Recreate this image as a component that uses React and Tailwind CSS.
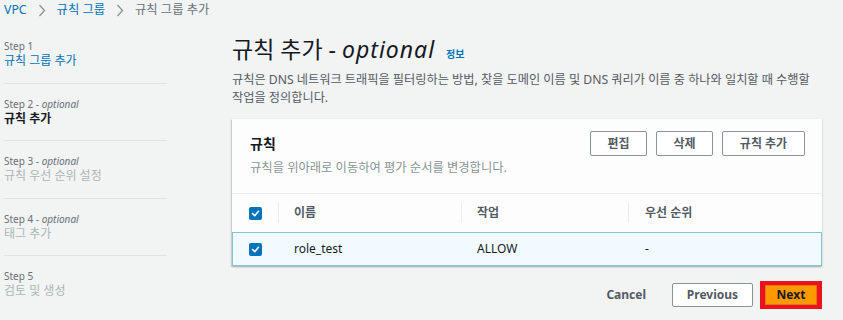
import React from 'react';

const FONT = { fontFamily: '"Noto Sans", "Noto Sans CJK KR", sans-serif' };

const steps = [
  { label: 'Step 1', name: '규칙 그룹 추가', state: 'done' },
  { label: 'Step 2', optional: true, name: '규칙 추가', state: 'current' },
  { label: 'Step 3', optional: true, name: '규칙 우선 순위 설정', state: 'todo' },
  { label: 'Step 4', optional: true, name: '태그 추가', state: 'todo' },
  { label: 'Step 5', name: '검토 및 생성', state: 'todo' },
];

const Chevron = () => (
  <svg width="8" height="13" viewBox="0 0 8 13" className="mx-[11px]">
    <polyline points="1.5,1 6.5,6.5 1.5,12" fill="none" stroke="#879596" strokeWidth="1.3" />
  </svg>
);

const Checkbox = () => (
  <span className="w-[13px] h-[13px] rounded-[2px] bg-[#0073bb] flex items-center justify-center">
    <svg width="9" height="9" viewBox="0 0 10 10">
      <polyline points="1.8,5.2 4.2,7.5 8.3,2.6" fill="none" stroke="#fff" strokeWidth="1.8" strokeLinecap="round" strokeLinejoin="round" />
    </svg>
  </span>
);

const OutlineButton = ({ children, width }) => (
  <button
    type="button"
    className={`h-[25px] ${width} border border-[#879596] rounded-[2px] bg-white text-[12px] font-bold text-[#545b64] leading-none`}
  >
    {children}
  </button>
);

export default function App() {
  return (
    <div className="w-[843px] h-[320px] bg-[#f2f3f3] overflow-hidden text-[#16191f]" style={FONT}>
      {/* Breadcrumb */}
      <div className="h-[20px] flex items-center pl-[4px] text-[12.3px]">
        <span className="text-[#0073bb]">VPC</span>
        <Chevron />
        <span className="text-[#0073bb]">규칙 그룹</span>
        <Chevron />
        <span className="text-[#687078]">규칙 그룹 추가</span>
      </div>

      <div className="flex">
        {/* Wizard steps */}
        <nav className="ml-[4px] w-[163px] mt-[19px]">
          {steps.map((s, i) => (
            <div
              key={s.label}
              className={`${i === 0 ? 'pt-0' : 'pt-[13px]'} pb-[13.5px] ${i < steps.length - 1 ? 'border-b border-[#dfe3e3]' : ''}`}
            >
              <div className="text-[10px] leading-[14px] text-[#687078]">
                {s.label}
                {s.optional && <span> - <i>optional</i></span>}
              </div>
              <div
                className={`text-[12px] leading-[16px] ${
                  s.state === 'done'
                    ? 'text-[#0073bb]'
                    : s.state === 'current'
                    ? 'font-bold text-[#16191f]'
                    : 'text-[#aab7b8]'
                }`}
              >
                {s.name}
              </div>
            </div>
          ))}
        </nav>

        {/* Main content */}
        <main className="ml-[65px] w-[590px] mt-[14px]">
          <h1 className="text-[23px] leading-[30px] font-normal flex items-baseline">
            <span>규칙 추가 - <i className="tracking-[1px]">optional</i></span>
            <span className="ml-[11px] text-[10px] font-bold text-[#0073bb]">정보</span>
          </h1>
          <p className="mt-[2px] text-[12.2px] leading-[18px] text-[#545b64] whitespace-nowrap">
            규칙은 DNS 네트워크 트래픽을 필터링하는 방법, 찾을 도메인 이름 및 DNS 쿼리가 이름 중 하나와 일치할 때 수행할
            <br />
            작업을 정의합니다.
          </p>

          {/* Rules card */}
          <section className="mt-[12px] bg-[#fdfdfd] shadow-[0_1px_2px_rgba(0,28,36,0.25),-1px_1px_1px_rgba(0,28,36,0.1)]">
            <div className="flex justify-between pt-[12px] pl-[18px] pr-[17px] pb-[17px] border-b border-[#eaeded]">
              <div className="pt-[3px]">
                <h2 className="text-[14px] leading-[20px] font-bold">규칙</h2>
                <p className="mt-[6px] text-[12.3px] leading-[16px] text-[#879596]">
                  규칙을 위아래로 이동하여 평가 순서를 변경합니다.
                </p>
              </div>
              <div className="flex gap-[9px]">
                <OutlineButton width="w-[57px]">편집</OutlineButton>
                <OutlineButton width="w-[57px]">삭제</OutlineButton>
                <OutlineButton width="w-[83px]">규칙 추가</OutlineButton>
              </div>
            </div>

            {/* Table header */}
            <div className="h-[38px] flex items-center text-[12px] font-bold text-[#545b64]">
              <div className="w-[46px] flex justify-center">
                <Checkbox />
              </div>
              <div className="w-[183px] flex items-center h-[20px] border-l border-[#eaeded] pl-[15px]">이름</div>
              <div className="w-[167px] flex items-center h-[20px] border-l border-[#eaeded] pl-[15px]">작업</div>
              <div className="flex-1 flex items-center h-[20px] border-l border-[#eaeded] pl-[16px]">우선 순위</div>
            </div>

            {/* Selected row */}
            <div className="h-[34px] flex items-center text-[12px] text-[#16191f] bg-[#f1faff] border border-[#7fc6d6]">
              <div className="w-[45px] flex justify-center">
                <Checkbox />
              </div>
              <div className="w-[183px] pl-[16px]">role_test</div>
              <div className="w-[167px] pl-[16px]">ALLOW</div>
              <div className="flex-1 pl-[17px]">-</div>
            </div>
          </section>

          {/* Footer actions */}
          <div className="mt-[15px] flex items-center justify-end">
            <button type="button" className="text-[12px] font-bold text-[#545b64] mr-[26px]">
              Cancel
            </button>
            <button
              type="button"
              className="h-[24px] w-[81px] border border-[#879596] rounded-[2px] bg-white text-[12px] font-bold text-[#545b64]"
            >
              Previous
            </button>
            <div className="ml-[7px] w-[62px] h-[28px] border-4 border-[#e8141c] bg-[#e8141c] flex items-center justify-center">
              <button
                type="button"
                className="w-[52px] h-[20px] bg-[#ff9900] border border-[#ec7211] text-[12px] font-bold text-[#16191f]"
              >
                Next
              </button>
            </div>
          </div>
        </main>
      </div>
    </div>
  );
}
